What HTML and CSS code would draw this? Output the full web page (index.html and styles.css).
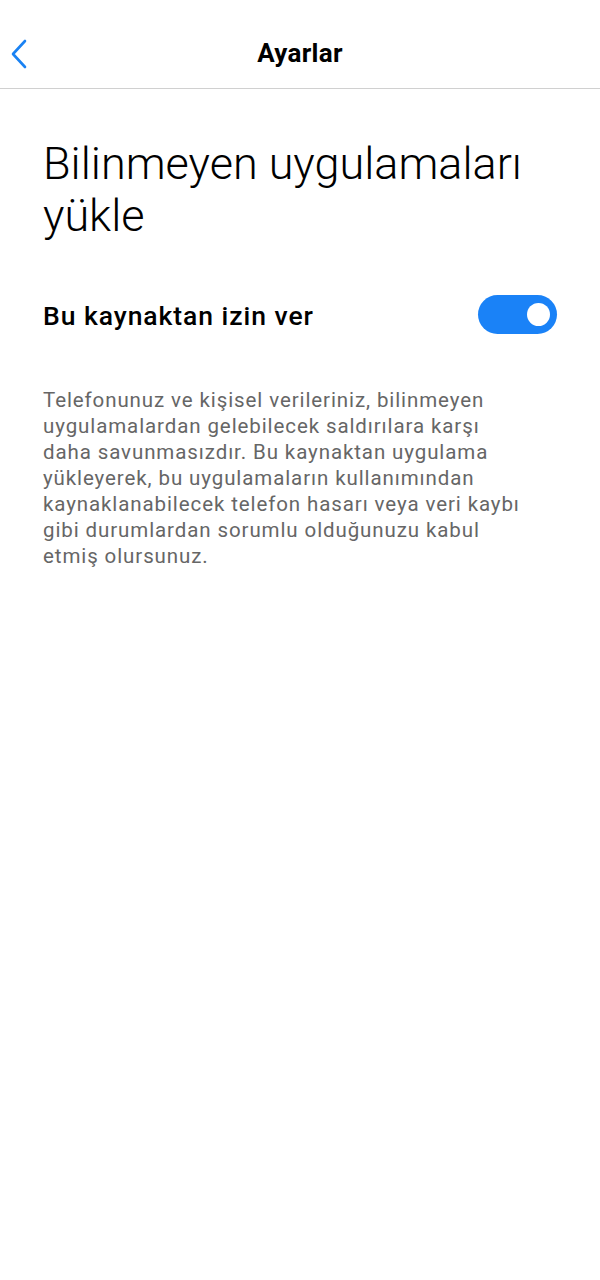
FILE: index.html
```html
<!DOCTYPE html>
<html lang="tr">
<head>
<meta charset="utf-8">
<title>Ayarlar</title>
<link rel="stylesheet" href="styles.css">
</head>
<body>
<header class="topbar">
  <button class="back" aria-label="Geri">
    <svg width="18" height="30" viewBox="0 0 18 30"><path d="M15 2 L3 15 L15 28" fill="none" stroke="#1a82f3" stroke-width="2.6" stroke-linecap="round" stroke-linejoin="round"/></svg>
  </button>
  <h1 class="title">Ayarlar</h1>
</header>
<main class="content">
  <h2 class="heading">Bilinmeyen uygulamaları yükle</h2>
  <div class="row">
    <span class="row-label">Bu kaynaktan izin ver</span>
    <span class="switch"><span class="knob"></span></span>
  </div>
  <p class="desc">Telefonunuz ve kişisel verileriniz, bilinmeyen uygulamalardan gelebilecek saldırılara karşı daha savunmasızdır. Bu kaynaktan uygulama yükleyerek, bu uygulamaların kullanımından kaynaklanabilecek telefon hasarı veya veri kaybı gibi durumlardan sorumlu olduğunuzu kabul etmiş olursunuz.</p>
</main>
</body>
</html>
```

FILE: styles.css
```css
html, body {
  margin: 0;
  padding: 0;
  background: #fff;
  font-family: Roboto, "Noto Sans", sans-serif;
}
.topbar {
  height: 88px;
  border-bottom: 1px solid #d0d0d0;
  display: flex;
  align-items: center;
  justify-content: center;
  position: relative;
}
.back {
  position: absolute;
  left: 10px;
  top: 39px;
  border: 0;
  background: none;
  padding: 0;
  width: 18px;
  height: 30px;
}
.back svg { display: block; }
.title {
  margin: 0;
  padding-top: 18px;
  font-size: 26px;
  font-weight: 700;
  letter-spacing: 0.3px;
  color: #000;
}
.content {
  padding: 0 43px;
}
.heading {
  margin: 0;
  padding-top: 49px;
  font-size: 45px;
  font-weight: 300;
  line-height: 52px;
  color: #000;
  width: 514px;
}
.row {
  display: flex;
  align-items: center;
  justify-content: space-between;
  margin-top: 53px;
  height: 39px;
}
.row-label {
  font-size: 26.5px;
  font-weight: 500;
  letter-spacing: 0.95px;
  color: #000;
  padding-top: 2px;
}
.switch {
  width: 79px;
  height: 39px;
  border-radius: 20px;
  background: #1a82f7;
  display: flex;
  align-items: center;
  justify-content: flex-end;
  padding-right: 7px;
  box-sizing: border-box;
}
.knob {
  width: 23px;
  height: 23px;
  border-radius: 50%;
  background: #fff;
}
.desc {
  margin: 53px 0 0;
  width: 484px;
  font-size: 20.5px;
  line-height: 26px;
  letter-spacing: 0.9px;
  color: #666;
}
```
